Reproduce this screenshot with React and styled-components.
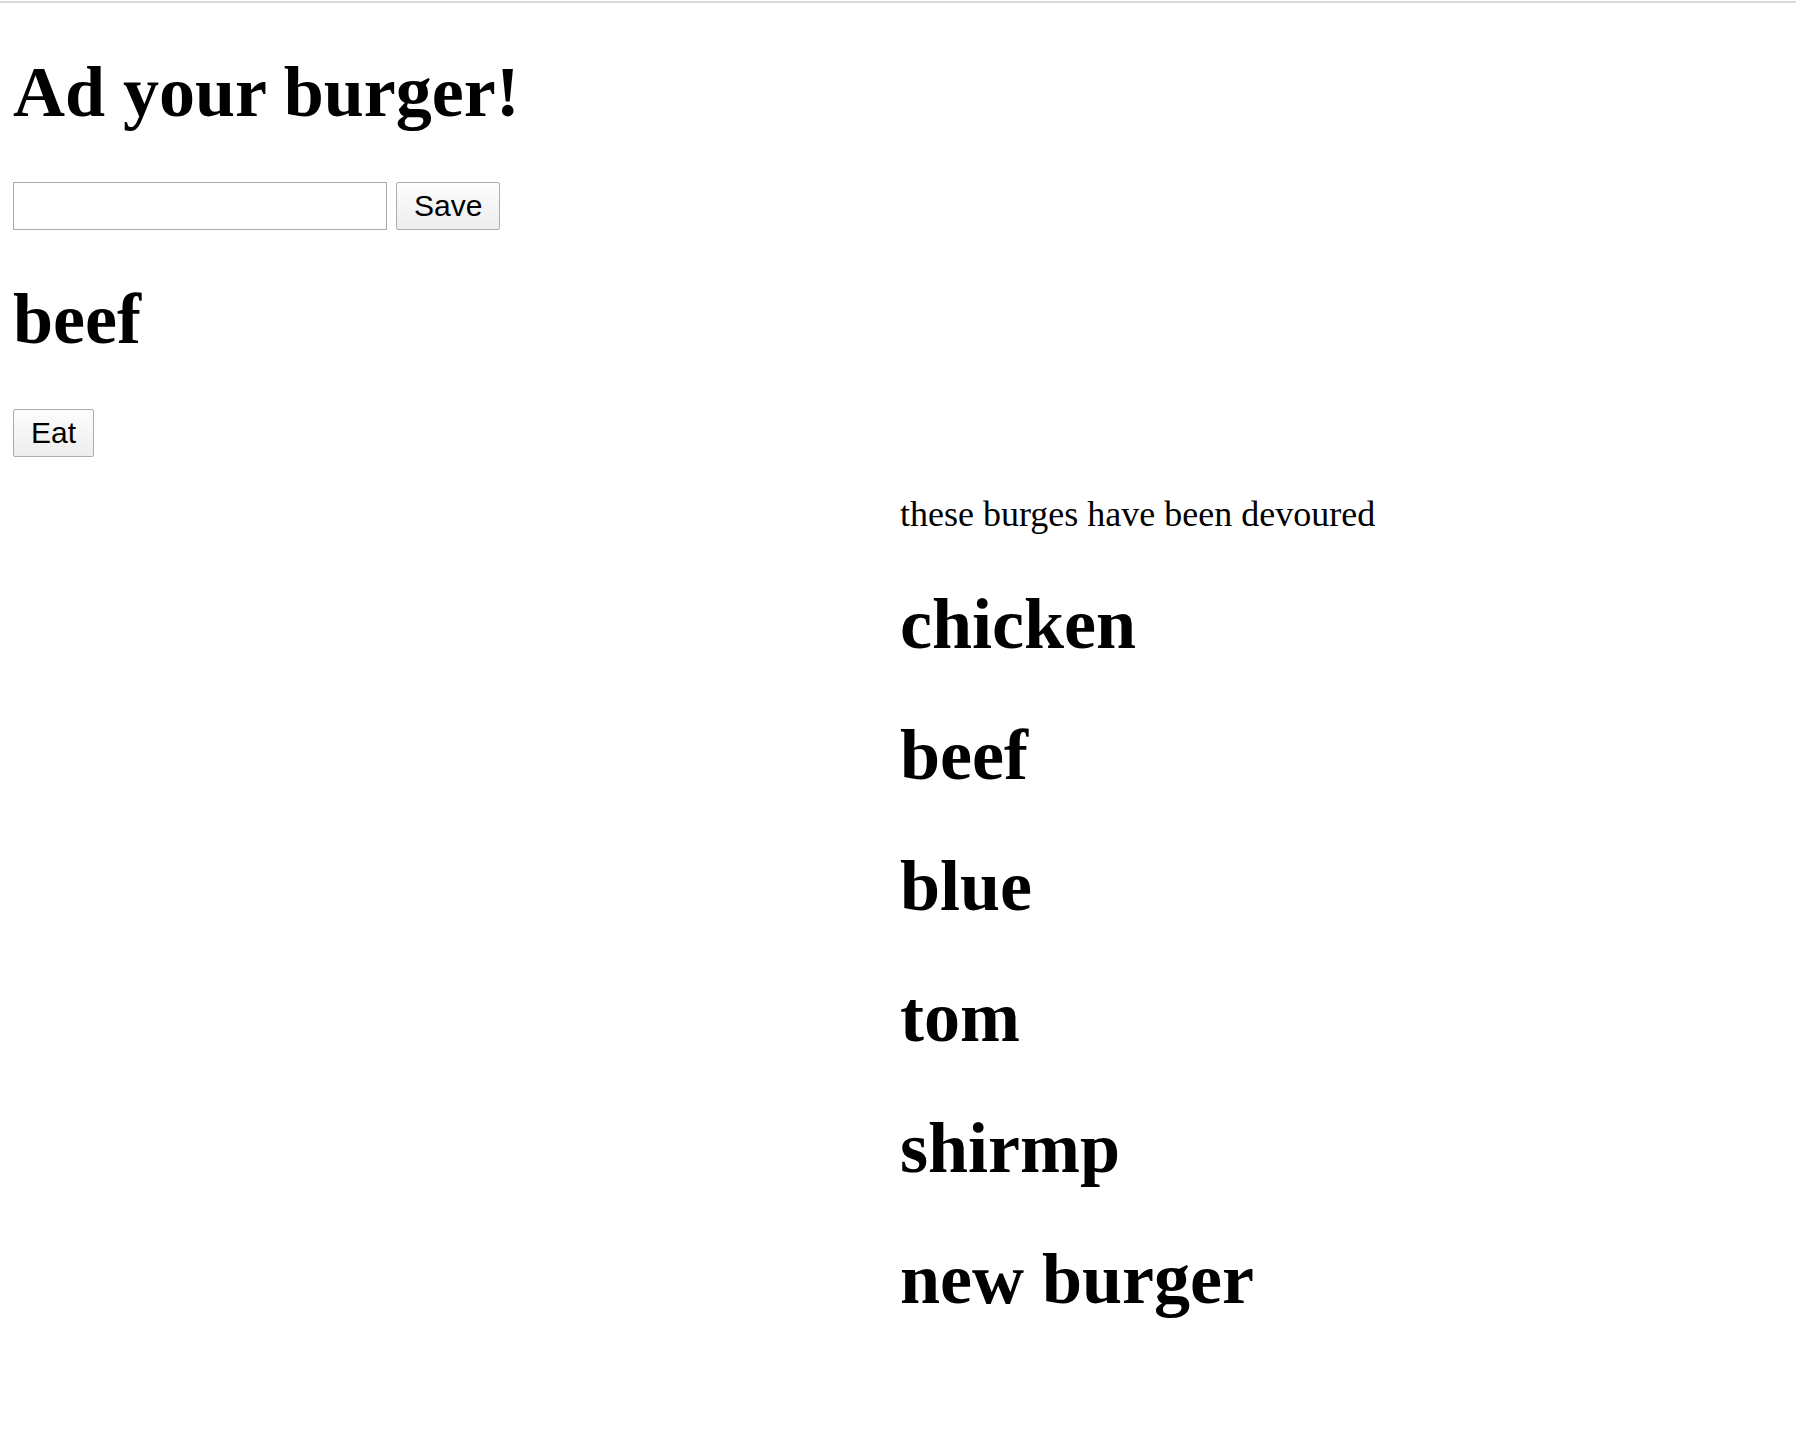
import React from "react";
import styled, { createGlobalStyle } from "styled-components";

const GlobalStyle = createGlobalStyle`
  body {
    margin: 0;
    background: #fff;
    color: #000;
    font-family: "Liberation Serif", "Times New Roman", serif;
  }
`;

const Page = styled.div`
  padding: 0 13px;
`;

const TopRule = styled.div`
  height: 2px;
  margin: 1px -13px 0;
  background: #dadada;
`;

const Title = styled.h1`
  font-size: 72px;
  font-weight: 700;
  margin: 48px 0;
  line-height: normal;
`;

const AddForm = styled.form`
  display: flex;
  align-items: center;
  gap: 9px;
`;

const TextInput = styled.input`
  box-sizing: border-box;
  width: 374px;
  height: 48px;
  margin: 0;
  padding: 2px 4px;
  border: 1px solid #a9a9a9;
  font-family: "Liberation Sans", Arial, sans-serif;
  font-size: 30px;
  outline: none;
`;

const Button = styled.button`
  box-sizing: border-box;
  height: 48px;
  margin: 0;
  padding: 0 17px;
  border: 1px solid #adadad;
  border-radius: 2px;
  background: linear-gradient(#fdfdfd, #ededed);
  color: #000;
  font-family: "Liberation Sans", Arial, sans-serif;
  font-size: 30px;
  line-height: 1;
  cursor: pointer;
`;

const BurgerName = styled.h1`
  font-size: 72px;
  font-weight: 700;
  margin: 48px 0;
  line-height: normal;
`;

const Actions = styled.div`
  display: flex;
`;

const DevouredRow = styled.div`
  display: grid;
  grid-template-columns: 1fr 1fr;
`;

const DevouredColumn = styled.div`
  grid-column: 2;
  padding-left: 2px;
`;

const Caption = styled.p`
  font-size: 36px;
  margin: 36px 0;
  line-height: normal;
`;

const waiting = ["beef"];
const devoured = ["chicken", "beef", "blue", "tom", "shirmp", "new burger"];

export default function App() {
  return (
    <>
      <GlobalStyle />
      <Page>
        <TopRule />
        <Title>Ad your burger!</Title>
        <AddForm onSubmit={(e) => e.preventDefault()}>
          <TextInput type="text" />
          <Button type="submit">Save</Button>
        </AddForm>
        {waiting.map((name, i) => (
          <div key={i}>
            <BurgerName>{name}</BurgerName>
            <Actions>
              <Button type="button">Eat</Button>
            </Actions>
          </div>
        ))}
        <DevouredRow>
          <DevouredColumn>
            <Caption>these burges have been devoured</Caption>
            {devoured.map((name, i) => (
              <BurgerName key={i}>{name}</BurgerName>
            ))}
          </DevouredColumn>
        </DevouredRow>
      </Page>
    </>
  );
}
